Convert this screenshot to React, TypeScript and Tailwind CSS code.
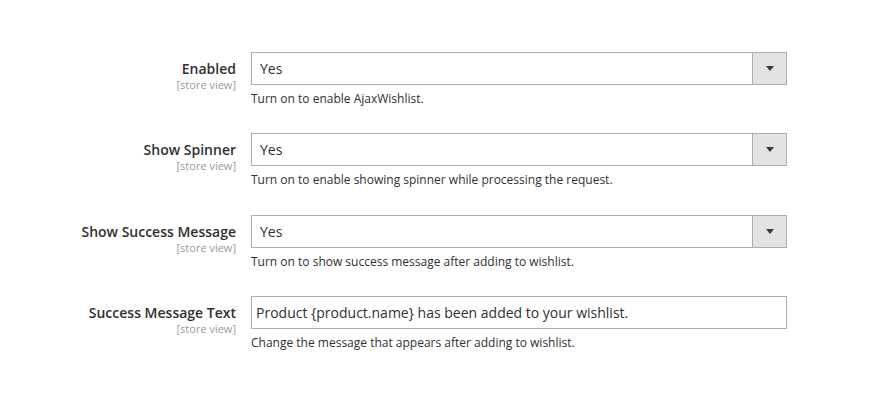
const rows = [
  { label: 'Enabled', value: 'Yes', note: 'Turn on to enable AjaxWishlist.', select: true },
  { label: 'Show Spinner', value: 'Yes', note: 'Turn on to enable showing spinner while processing the request.', select: true },
  { label: 'Show Success Message', value: 'Yes', note: 'Turn on to show success message after adding to wishlist.', select: true },
  {
    label: 'Success Message Text',
    value: 'Product {product.name} has been added to your wishlist.',
    note: 'Change the message that appears after adding to wishlist.',
    select: false,
  },
];

function SelectBox({ value }: { value: string }) {
  return (
    <div className="flex h-[33px] w-[536px] border border-[#adadad] bg-white">
      <div className="flex-1 pl-[8px] text-[14px] leading-[31px] text-[#303030]">{value}</div>
      <div className="flex w-[34px] items-center justify-center border-l border-[#adadad] bg-[#e3e3e3]">
        <svg width="8" height="5" viewBox="0 0 8 5">
          <path d="M0 0 H8 L4 5 Z" fill="#41362f" />
        </svg>
      </div>
    </div>
  );
}

function TextBox({ value }: { value: string }) {
  return (
    <div className="h-[33px] w-[536px] border border-[#adadad] bg-white pl-[4px] text-[14px] leading-[31px] text-[#303030]">
      {value}
    </div>
  );
}

export default function App() {
  return (
    <div
      className="h-[404px] w-[881px] bg-white pt-[52px] text-[#303030]"
      style={{ fontFamily: '"Open Sans", "Liberation Sans", sans-serif' }}
    >
      {rows.map((row) => (
        <div key={row.label} className="flex h-[81.4px]">
          {/* Label column */}
          <div className="w-[236px] pt-[7px] text-right">
            <div className="text-[14px] font-semibold leading-[19px]">{row.label}</div>
            <div className="text-[11px] leading-[13px] text-[#999999]">[store view]</div>
          </div>

          <div className="ml-[15px]">
            {row.select ? <SelectBox value={row.value} /> : <TextBox value={row.value} />}
            <div className="mt-[6px] text-[12px] leading-[16px]">{row.note}</div>
          </div>
        </div>
      ))}
    </div>
  );
}
